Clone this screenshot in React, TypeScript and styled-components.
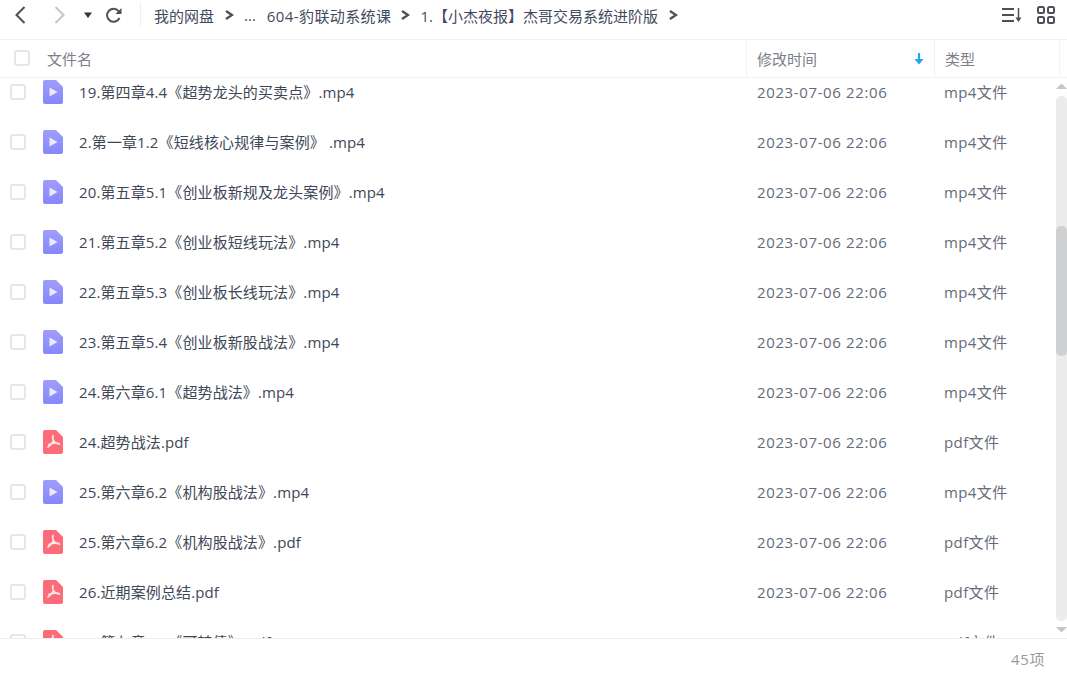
import React from "react";
import styled, { createGlobalStyle } from "styled-components";

const GlobalStyle = createGlobalStyle`
  html, body {
    margin: 0;
    padding: 0;
    background: #fff;
    overflow: hidden;
  }
  * {
    box-sizing: border-box;
  }
`;

const FONT = `"Open Sans", "Noto Sans CJK SC", sans-serif`;

const Page = styled.div`
  width: 1067px;
  height: 677px;
  display: flex;
  flex-direction: column;
  font-family: ${FONT};
  font-size: 15px;
  color: #424e67;
  background: #fff;
`;

const Toolbar = styled.div`
  height: 40px;
  flex: none;
  display: flex;
  align-items: center;
  padding: 0 12px 9px 13px;
  border-bottom: 1px solid #f2f2f2;
`;

const NavIcon = styled.svg<{ $ml?: number }>`
  display: block;
  flex: none;
  margin-left: ${(p) => p.$ml ?? 0}px;
`;

const Divider = styled.div`
  width: 1px;
  height: 24px;
  margin: 0 13px 0 17px;
  background: #eeeeee;
`;

const Crumbs = styled.div`
  flex: 1;
  display: flex;
  align-items: center;
  color: #3f4a5e;
  white-space: nowrap;
`;

const Crumb = styled.span<{ $ml?: number; $spacing?: number }>`
  margin-left: ${(p) => p.$ml ?? 0}px;
  letter-spacing: ${(p) => p.$spacing ?? 0}px;
`;

const Header = styled.div`
  height: 38px;
  flex: none;
  display: grid;
  grid-template-columns: 747px 188px 125px 7px;
  border-bottom: 1px solid #f2f2f2;
  color: #7b7f88;
`;

const HeadCell = styled.div<{ $first?: boolean }>`
  display: flex;
  align-items: center;
  justify-content: space-between;
  padding-left: ${(p) => (p.$first ? 14 : 10)}px;
  padding-right: 10px;
  border-right: 1px solid #f2f2f2;
`;

const HeadName = styled.div`
  display: flex;
  align-items: center;
  gap: 17px;
`;

const Box = styled.span<{ $head?: boolean }>`
  display: block;
  flex: none;
  width: 16px;
  height: 16px;
  margin-top: ${(p) => (p.$head ? -2 : 0)}px;
  border: 2px solid #e6e6e6;
  border-radius: 3px;
  background: #fff;
`;

const Viewport = styled.div`
  position: relative;
  flex: 1;
  min-height: 0;
  overflow: hidden;
`;

const List = styled.div`
  margin-top: -11px;
`;

const Row = styled.div`
  height: 50px;
  display: grid;
  grid-template-columns: 747px 188px 1fr;
  align-items: center;
`;

const NameCell = styled.div`
  display: flex;
  align-items: center;
  padding-left: 10px;
  color: #3e4756;
  letter-spacing: 0.12px;
`;

const FileName = styled.span`
  margin-top: -2px;
`;

const RowIcon = styled.svg`
  display: block;
  flex: none;
  margin: -1px 16px 0 17px;
`;

const TimeCell = styled.div`
  padding-left: 10px;
  color: #656b78;
  letter-spacing: 0.62px;
`;

const TypeCell = styled.div`
  margin-top: -2px;
  padding-left: 9px;
  color: #656b78;
  letter-spacing: 0.4px;
`;

const ScrollTrack = styled.div`
  position: absolute;
  top: 18px;
  right: 0;
  width: 11px;
  height: 525px;
  border-radius: 5px;
  background: #ececec;
`;

const ScrollThumb = styled.div`
  position: absolute;
  top: 130px;
  left: 0;
  width: 100%;
  height: 130px;
  border-radius: 5px;
  background: #cfd0d2;
`;

const ScrollArrow = styled.div<{ $down?: boolean }>`
  position: absolute;
  right: 0;
  width: 11px;
  height: 0;
  ${(p) => (p.$down ? "top: 549px;" : "top: 6px;")}
  border-left: 5.5px solid transparent;
  border-right: 5.5px solid transparent;
  ${(p) =>
    p.$down
      ? "border-top: 5px solid #c6c6c6;"
      : "border-bottom: 5px solid #c6c6c6;"}
`;

const Footer = styled.div`
  height: 39px;
  flex: none;
  display: flex;
  align-items: center;
  justify-content: flex-end;
  padding-right: 22px;
  border-top: 1px solid #ececec;
  color: #9b9b9b;
  letter-spacing: 0.6px;
`;

const Chevron = ({ ml = 0 }: { ml?: number }) => (
  <NavIcon $ml={ml} width="10" height="12" viewBox="0 0 10 12">
    <path d="M2 2l6 4-6 4" fill="none" stroke="#4a5160" strokeWidth="2.400" />
  </NavIcon>
);

const VideoIcon = () => (
  <RowIcon width="20" height="24" viewBox="0 0 20 24">
    <defs>
      <linearGradient id="vid" x1="0" y1="0" x2="0" y2="1">
        <stop offset="0" stopColor="#a09dfb" />
        <stop offset="1" stopColor="#8587fb" />
      </linearGradient>
    </defs>
    <path
      d="M2 0h11l7 7v15a2 2 0 0 1-2 2H2a2 2 0 0 1-2-2V2a2 2 0 0 1 2-2z"
      fill="url(#vid)"
    />
    <path d="M6.500 7.500l8 4.500-8 4.500z" fill="#eceafe" />
  </RowIcon>
);

const PdfIcon = () => (
  <RowIcon width="20" height="24" viewBox="0 0 20 24">
    <path
      d="M2 0h11l7 7v15a2 2 0 0 1-2 2H2a2 2 0 0 1-2-2V2a2 2 0 0 1 2-2z"
      fill="#fd6a78"
    />
    <path
      d="M10 5.500c-.8 2.500.5 5.500 2 7 1.500 1 3.500 1 4.500 1.500M10 11.500c-1 2-2.500 4-5 5.500M6 14.500c3-1.500 6-2 9-1.500"
      fill="none"
      stroke="#fde8ea"
      strokeWidth="1.700"
      strokeLinecap="round"
    />
  </RowIcon>
);

type FileRow = { name: string; kind: "mp4" | "pdf" };

const files: FileRow[] = [
  { name: "19.第四章4.4《超势龙头的买卖点》.mp4", kind: "mp4" },
  { name: "2.第一章1.2《短线核心规律与案例》 .mp4", kind: "mp4" },
  { name: "20.第五章5.1《创业板新规及龙头案例》.mp4", kind: "mp4" },
  { name: "21.第五章5.2《创业板短线玩法》.mp4", kind: "mp4" },
  { name: "22.第五章5.3《创业板长线玩法》.mp4", kind: "mp4" },
  { name: "23.第五章5.4《创业板新股战法》.mp4", kind: "mp4" },
  { name: "24.第六章6.1《超势战法》.mp4", kind: "mp4" },
  { name: "24.超势战法.pdf", kind: "pdf" },
  { name: "25.第六章6.2《机构股战法》.mp4", kind: "mp4" },
  { name: "25.第六章6.2《机构股战法》.pdf", kind: "pdf" },
  { name: "26.近期案例总结.pdf", kind: "pdf" },
  { name: "27.第七章7.1《可转债》.pdf", kind: "pdf" },
];

const App = () => (
  <Page>
    <GlobalStyle />
    <Toolbar>
      <NavIcon width="14" height="22" viewBox="0 0 14 22">
        <path d="M11.500 3L3.500 11l8 8" fill="none" stroke="#4b4f56" strokeWidth="2" />
      </NavIcon>
      <NavIcon $ml={26} width="14" height="22" viewBox="0 0 14 22">
        <path d="M2.500 3l8 8-8 8" fill="none" stroke="#c4c4c4" strokeWidth="2" />
      </NavIcon>
      <NavIcon $ml={16} width="10" height="8" viewBox="0 0 10 8">
        <path d="M1 1.500h8L5 7z" fill="#33373d" />
      </NavIcon>
      <NavIcon $ml={12} width="18" height="18" viewBox="0 0 18 18">
        <path
          d="M14.500 12a6.500 6.500 0 1 1-.6-6.500"
          fill="none"
          stroke="#4b4f56"
          strokeWidth="2"
        />
        <path d="M16.500 2v6h-6z" fill="#4b4f56" />
      </NavIcon>
      <Divider />
      <Crumbs>
        <Crumb>我的网盘</Crumb>
        <Chevron ml={10} />
        <Crumb $ml={10}>...</Crumb>
        <Crumb $ml={11} $spacing={0.4}>604-豹联动系统课</Crumb>
        <Chevron ml={9} />
        <Crumb $ml={10}>1.【小杰夜报】杰哥交易系统进阶版</Crumb>
        <Chevron ml={10} />
      </Crumbs>
      <NavIcon width="22" height="16" viewBox="0 0 22 16">
        <path
          d="M1 2h12M1 8h12M1 14h12"
          fill="none"
          stroke="#4b4f56"
          strokeWidth="2"
        />
        <path d="M17.500 1v12" stroke="#4b4f56" strokeWidth="1.500" />
        <path d="M14.500 10.500h6l-3 4.500z" fill="#4b4f56" />
      </NavIcon>
      <NavIcon $ml={14} width="18" height="18" viewBox="0 0 18 18">
        <g fill="none" stroke="#4b4f56" strokeWidth="2">
          <rect x="1" y="1" width="6" height="6" rx="1.500" />
          <rect x="11" y="1" width="6" height="6" rx="1.500" />
          <rect x="1" y="11" width="6" height="6" rx="1.500" />
          <rect x="11" y="11" width="6" height="6" rx="1.500" />
        </g>
      </NavIcon>
    </Toolbar>
    <Header>
      <HeadCell $first>
        <HeadName>
          <Box $head />
          文件名
        </HeadName>
      </HeadCell>
      <HeadCell>
        修改时间
        <svg width="10" height="13" viewBox="0 0 10 13">
          <path d="M5 1v7" stroke="#1ea7f5" strokeWidth="2.200" />
          <path d="M.5 7h9L5 12.500z" fill="#1ea7f5" />
        </svg>
      </HeadCell>
      <HeadCell>类型</HeadCell>
    </Header>
    <Viewport>
      <List>
        {files.map((file, i) => (
          <Row key={i.toString()}>
            <NameCell>
              <Box />
              {file.kind === "mp4" ? <VideoIcon /> : <PdfIcon />}
              <FileName>{file.name}</FileName>
            </NameCell>
            <TimeCell>2023-07-06 22:06</TimeCell>
            <TypeCell>{file.kind === "pdf" ? "pdf文件" : "mp4文件"}</TypeCell>
          </Row>
        ))}
      </List>
      <ScrollArrow />
      <ScrollTrack>
        <ScrollThumb />
      </ScrollTrack>
      <ScrollArrow $down />
    </Viewport>
    <Footer>45项</Footer>
  </Page>
);

export default App;
